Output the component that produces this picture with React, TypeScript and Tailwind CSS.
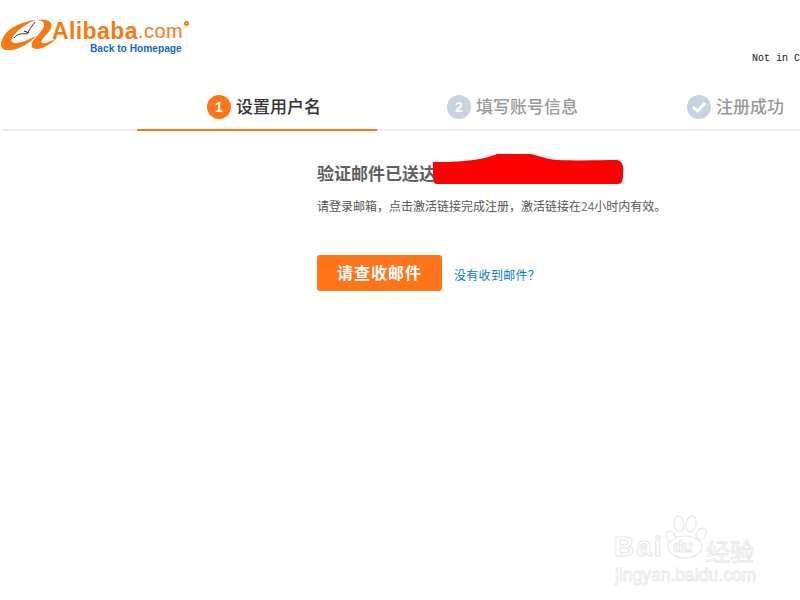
const cjk = "font-['Noto_Sans_CJK_SC','Noto_Sans',sans-serif]";

const steps = [
  { label: "设置用户名", mark: "1", active: true },
  { label: "填写账号信息", mark: "2", active: false },
  { label: "注册成功", mark: "check", active: false },
];

const Logo = () => (
  <div className="flex items-start">
    <svg width="52" height="38" viewBox="0 0 52 38" className="shrink-0 overflow-visible">
      <g fill="#f47a12">
        <path d="M36 4 C24 5 9 11 4 20 C-1 28 0 34 8 34 C17 35 29 28 36 20 C28 24 19 28 14 27 C10 26 11 22 15 18 C20 12 28 7 36 4 Z" />
        <path d="M36 4 C41 4 45 6 44 10 C43 14 37 20 33 25 C30 30 32 33 37 33 C43 33 51 28 57 22 C50 26 44 28 42 27 C40 26 43 22 47 18 C51 14 53 9 50 6 C47 3 42 3 36 4 Z" />
      </g>
      <path d="M14 22 C17 18 22 17 27 18 C29 14 32 10 35 6" stroke="#333" strokeWidth="1" fill="none" />
      <path d="M24 15 L29 17" stroke="#333" strokeWidth="1.2" fill="none" />
    </svg>
    <div className="flex flex-col pt-[3px]">
      <div className="flex items-start h-[24px] font-['Liberation_Sans',sans-serif]">
        <span className="text-[23px] leading-[25px] font-bold text-[#f47a12] tracking-[0.4px]">Alibaba</span>
        <span className="text-[20px] leading-[25px] text-[#f47a12] tracking-[0.5px]">.com</span>
        <span className="ml-[1px] mt-[2px] w-[5px] h-[5px] rounded-full border-2 border-[#f47a12]" />
      </div>
      <span className="ml-[38px] text-[10.2px] leading-[12px] font-bold text-[#1269c7] font-['Liberation_Sans',sans-serif] whitespace-nowrap">
        Back to Homepage
      </span>
    </div>
  </div>
);

const StepMark = ({ mark, active }: { mark: string; active: boolean }) => (
  <span
    className={`w-6 h-6 rounded-full flex items-center justify-center text-white text-[14px] font-bold font-['Liberation_Sans',sans-serif] ${
      active ? "bg-[#ff7519]" : "bg-[#c7d2e3]"
    }`}
  >
    {mark === "check" ? (
      <svg width="16" height="14" viewBox="0 0 16 14">
        <path d="M2 7 L6.5 11 L14 3" stroke="#fff" strokeWidth="3" fill="none" />
      </svg>
    ) : (
      mark
    )}
  </span>
);

const Watermark = () => (
  <div className="absolute left-[613px] top-[514px] w-[145px] h-[72px] select-none">
    <svg width="44" height="46" viewBox="0 0 44 46" className="absolute left-[51px] top-0">
      <g fill="#fff" stroke="#e8e8e8" strokeWidth="1.2">
        <ellipse cx="7" cy="23" rx="4.5" ry="6" transform="rotate(-25 7 23)" />
        <ellipse cx="15" cy="10" rx="5" ry="8" transform="rotate(-8 15 10)" />
        <ellipse cx="27" cy="10" rx="5" ry="8" transform="rotate(12 27 10)" />
        <ellipse cx="37" cy="20" rx="4.5" ry="6.5" transform="rotate(30 37 20)" />
        <ellipse cx="21" cy="33" rx="17" ry="11" />
      </g>
    </svg>
    <span className="absolute left-[1px] top-[22px] text-[28px] leading-[22px] font-bold tracking-[2px] text-white [-webkit-text-stroke:1px_#e6e6e6] font-['Liberation_Sans',sans-serif]">
      Bai
    </span>
    <span className="absolute left-[60px] top-[26px] text-[16px] leading-[14px] font-bold text-white [-webkit-text-stroke:1px_#e6e6e6] font-['Liberation_Sans',sans-serif]">
      du
    </span>
    <span className={`absolute left-[93px] top-[25px] text-[24px] leading-[24px] text-white [-webkit-text-stroke:0.8px_#e6e6e6] whitespace-nowrap ${cjk}`}>
      经验
    </span>
    <span className="absolute left-[2px] top-[52px] text-[17.5px] leading-[18px] text-white [-webkit-text-stroke:0.8px_#e8e8e8] whitespace-nowrap font-['Liberation_Sans',sans-serif]">
      jingyan.baidu.com
    </span>
  </div>
);

export default function App() {
  return (
    <div className={`relative w-[800px] h-[600px] overflow-hidden bg-white ${cjk}`}>
      <header className="flex h-[85px]">
        <div className="w-[752px] shrink-0 pt-[16px]">
          <Logo />
        </div>
        <span className="pt-[53px] text-[10px] leading-[12px] text-[#111] whitespace-nowrap font-['Liberation_Mono',monospace]">
          Not in C
        </span>
      </header>

      <nav className="ml-[2px] pl-[135px] flex border-b-2 border-[#e8ecf3] h-[46px]">
        {steps.map((step) => (
          <div
            key={step.label}
            className={`w-[240px] shrink-0 h-[46px] pl-[70px] pt-[10px] flex items-start gap-[5px] border-b-2 ${
              step.active ? "border-[#ff7519]" : "border-transparent"
            }`}
          >
            <StepMark mark={step.mark} active={step.active} />
            <span
              className={`text-[17px] leading-[22px] font-medium whitespace-nowrap ${
                step.active ? "text-[#333]" : "text-[#999]"
              }`}
            >
              {step.label}
            </span>
          </div>
        ))}
      </nav>

      <main className="pl-[317px] pt-[30px]">
        <div className="relative">
          <h2 className="text-[17px] leading-[24px] font-bold text-[#5f5f5f]">验证邮件已送达</h2>
          <svg width="192" height="31" viewBox="0 0 192 31" className="absolute left-[115px] top-[-7px]">
            <path
              d="M1 8 C20 8 45 8 65 0 C75 0 90 0 98 0 C108 2 118 6 125 6 C150 7 170 6 185 6 C190 7 192 11 191 20 C191 27 190 30 186 30 C130 30 60 30 5 30 C2 30 1 27 1 20 Z"
              fill="#ff0000"
            />
          </svg>
        </div>
        <p className="mt-[12px] text-[12px] leading-[18px] text-[#555] whitespace-nowrap">
          请登录邮箱，点击激活链接完成注册，激活链接在<span className="text-[#777]">24</span>小时内有效。
        </p>
        <div className="mt-[40px] flex items-center gap-[12px]">
          <button className="w-[125px] h-[36px] pb-[2px] rounded-[3px] bg-[#ff7519] text-white text-[16px] font-bold tracking-[1px]">
            请查收邮件
          </button>
          <a className="mt-[4px] text-[12px] leading-[18px] tracking-[0.3px] text-[#0a7cc1]">没有收到邮件？</a>
        </div>
      </main>

      <Watermark />
    </div>
  );
}
